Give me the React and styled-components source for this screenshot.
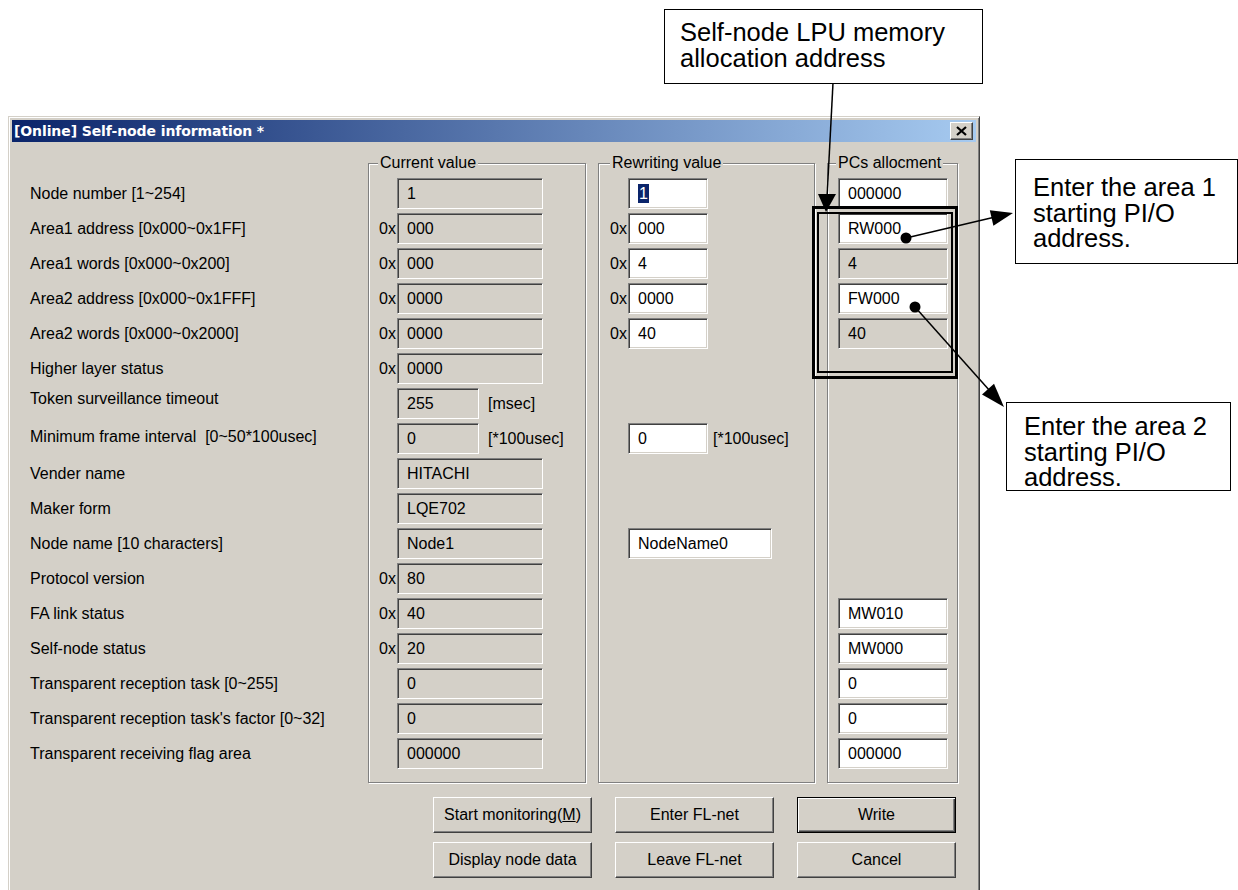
import React from 'react';
import styled, { createGlobalStyle, css } from 'styled-components';

const GlobalStyle = createGlobalStyle`
  html, body {
    margin: 0;
    padding: 0;
    background: #fff;
  }
  body {
    font-family: "Liberation Sans", Arial, sans-serif;
    color: #000;
  }
`;

const FACE = '#d4d0c8';

const Page = styled.div`
  position: relative;
  width: 1238px;
  height: 890px;
  overflow: hidden;
  box-sizing: border-box;
  padding: 116px 0 0 8px;
`;

const Dialog = styled.div`
  width: 972px;
  height: 800px;
  box-sizing: border-box;
  background: ${FACE};
  border: 1px solid;
  border-color: ${FACE} #404040 #404040 ${FACE};
  box-shadow: inset 1px 1px 0 #fff, inset -1px -1px 0 #808080;
  padding: 3px;
`;

const TitleBar = styled.div`
  height: 22px;
  display: flex;
  align-items: center;
  justify-content: space-between;
  padding: 0 3px 0 2px;
  background: linear-gradient(to right, #0a246a, #a6caf0);
`;

const Title = styled.span`
  font: bold 14px "DejaVu Sans", Verdana, sans-serif;
  letter-spacing: -0.1px;
  color: #fff;
  white-space: nowrap;
`;

const CloseButton = styled.div`
  width: 23px;
  height: 18px;
  box-sizing: border-box;
  display: flex;
  align-items: center;
  justify-content: center;
  background: ${FACE};
  border: 1px solid;
  border-color: #fff #404040 #404040 #fff;
  box-shadow: inset -1px -1px 0 #808080;
`;

const Body = styled.div`
  padding: 12px 0 0 18px;
`;

const Columns = styled.div`
  display: flex;
  align-items: flex-start;
`;

const LabelColumn = styled.div`
  width: 338px;
  padding-top: 24px;
  display: flex;
  flex-direction: column;
  gap: 4px;
`;

const Label = styled.div`
  height: 31px;
  box-sizing: border-box;
  display: flex;
  align-items: center;
  font-size: 16px;
  white-space: pre;
  padding-bottom: ${p => p.$lift || 0}px;
`;

const Group = styled.fieldset`
  width: ${p => p.$w}px;
  box-sizing: border-box;
  margin: 0 0 0 ${p => p.$gap}px;
  padding: 6px 0 13px 0;
  border: 1px solid #808080;
  box-shadow: inset 1px 1px 0 #fff, 1px 1px 0 #fff;
  display: flex;
  flex-direction: column;
  gap: 4px;
`;

const Legend = styled.legend`
  font-size: 16px;
  line-height: 18px;
  padding: 0 2px;
  margin-left: ${p => p.$offset}px;
  background: ${FACE};
  white-space: nowrap;
`;

const Row = styled.div`
  height: 31px;
  display: flex;
  align-items: center;
  padding-left: ${p => p.$indent}px;
`;

const Prefix = styled.span`
  width: 19px;
  box-sizing: border-box;
  padding-right: 1px;
  text-align: right;
  font-size: 16px;
`;

const Field = styled.div`
  width: ${p => p.$w}px;
  height: 31px;
  box-sizing: border-box;
  display: flex;
  align-items: center;
  padding-left: 9px;
  font-size: 16px;
  white-space: nowrap;
  background: ${p => (p.$white ? '#fff' : FACE)};
  border: 1px solid;
  border-color: #808080 #fff #fff #808080;
  box-shadow: inset 1px 1px 0 #404040, inset -1px -1px 0 ${FACE};
`;

const Selected = styled.span`
  background: #0a246a;
  color: #fff;
  padding: 0 1px;
  line-height: 19px;
`;

const Unit = styled.span`
  margin-left: ${p => p.$gap}px;
  font-size: 16px;
  white-space: nowrap;
`;

const ButtonGrid = styled.div`
  margin: 14px 0 0 403px;
  display: grid;
  grid-template-columns: repeat(3, 159px);
  grid-auto-rows: 36px;
  column-gap: 23px;
  row-gap: 9px;
`;

const Button = styled.button`
  margin: 0;
  padding: 0;
  font: 16px "Liberation Sans", Arial, sans-serif;
  color: #000;
  background: ${FACE};
  border: 1px solid;
  border-color: #fff #404040 #404040 #fff;
  box-shadow: inset -1px -1px 0 #808080, inset 1px 1px 0 ${FACE};
  ${p => p.$default && css`
    border-color: #000;
    box-shadow: inset 1px 1px 0 #fff, inset -1px -1px 0 #404040, inset -2px -2px 0 #808080;
  `}
`;

const Callout = styled.div`
  position: absolute;
  left: ${p => p.$x}px;
  top: ${p => p.$y}px;
  width: ${p => p.$w}px;
  height: ${p => p.$h}px;
  box-sizing: border-box;
  padding: ${p => p.$pt}px 0 0 ${p => p.$pl}px;
  background: #fff;
  border: 1.5px solid #000;
  font: 25.5px/25.5px "Liberation Sans", Arial, sans-serif;
  color: #000;
`;

const Overlay = styled.svg`
  position: absolute;
  left: 0;
  top: 0;
  pointer-events: none;
`;

// one entry per dialog row: label, current value, rewriting value, PCs allocation
const ROWS = [
  { label: 'Node number [1~254]', cur: { v: '1' }, rw: { v: '1', sel: true, w: 80 }, pcs: { v: '000000', white: true } },
  { label: 'Area1 address [0x000~0x1FF]', cur: { v: '000', hex: true }, rw: { v: '000', hex: true, w: 80 }, pcs: { v: 'RW000', white: true } },
  { label: 'Area1 words [0x000~0x200]', cur: { v: '000', hex: true }, rw: { v: '4', hex: true, w: 80 }, pcs: { v: '4' } },
  { label: 'Area2 address [0x000~0x1FFF]', cur: { v: '0000', hex: true }, rw: { v: '0000', hex: true, w: 80 }, pcs: { v: 'FW000', white: true } },
  { label: 'Area2 words [0x000~0x2000]', cur: { v: '0000', hex: true }, rw: { v: '40', hex: true, w: 80 }, pcs: { v: '40' } },
  { label: 'Higher layer status', cur: { v: '0000', hex: true } },
  { label: 'Token surveillance timeout', lift: 10, cur: { v: '255', w: 82, unit: '[msec]' } },
  { label: 'Minimum frame interval  [0~50*100usec]', lift: 4, cur: { v: '0', w: 82, unit: '[*100usec]' }, rw: { v: '0', w: 80, unit: '[*100usec]' } },
  { label: 'Vender name', cur: { v: 'HITACHI' } },
  { label: 'Maker form', cur: { v: 'LQE702' } },
  { label: 'Node name [10 characters]', cur: { v: 'Node1' }, rw: { v: 'NodeName0', w: 144 } },
  { label: 'Protocol version', cur: { v: '80', hex: true } },
  { label: 'FA link status', cur: { v: '40', hex: true }, pcs: { v: 'MW010', white: true } },
  { label: 'Self-node status', cur: { v: '20', hex: true }, pcs: { v: 'MW000', white: true } },
  { label: 'Transparent reception task [0~255]', cur: { v: '0' }, pcs: { v: '0', white: true } },
  { label: "Transparent reception task's factor [0~32]", cur: { v: '0' }, pcs: { v: '0', white: true } },
  { label: 'Transparent receiving flag area', cur: { v: '000000' }, pcs: { v: '000000', white: true } },
];

function Cell({ cell, prefixed, white, width, unitGap, indent }) {
  if (!cell) return <Row $indent={indent} />;
  return (
    <Row $indent={indent}>
      {prefixed && <Prefix>{cell.hex ? '0x' : ''}</Prefix>}
      <Field $w={cell.w || width} $white={white || cell.white}>
        {cell.sel ? <Selected>{cell.v}</Selected> : cell.v}
      </Field>
      {cell.unit && <Unit $gap={unitGap}>{cell.unit}</Unit>}
    </Row>
  );
}

function CloseIcon() {
  return (
    <svg width="11" height="10" viewBox="0 0 11 10">
      <path d="M1 1 L10 9 M10 1 L1 9" stroke="#000" strokeWidth="2.2" />
    </svg>
  );
}

function Annotations() {
  return (
    <Overlay width="1238" height="890" viewBox="0 0 1238 890">
      <g stroke="#000" fill="none">
        <line x1="833" y1="83" x2="827" y2="198" strokeWidth="1.5" />
        <rect x="813.5" y="207.5" width="143" height="170" strokeWidth="3" />
        <rect x="818" y="213" width="134" height="159" strokeWidth="2" />
        <line x1="906" y1="238" x2="993" y2="217.5" strokeWidth="1.5" />
        <line x1="915" y1="307" x2="990" y2="391" strokeWidth="1.5" />
      </g>
      <g fill="#000">
        <polygon points="826,212 818,194 836,194" />
        <circle cx="906" cy="238" r="5.5" />
        <polygon points="1013,213 993.4,225.8 989.8,210.2" />
        <circle cx="915" cy="307" r="5.5" />
        <polygon points="1004,407 982,394.4 994,383.8" />
      </g>
    </Overlay>
  );
}

export default function App() {
  return (
    <Page>
      <GlobalStyle />
      <Dialog>
        <TitleBar>
          <Title>[Online] Self-node information *</Title>
          <CloseButton><CloseIcon /></CloseButton>
        </TitleBar>
        <Body>
          <Columns>
            <LabelColumn>
              {ROWS.map(r => <Label key={r.label} $lift={r.lift}>{r.label}</Label>)}
            </LabelColumn>
            <Group $w={218} $gap={0}>
              <Legend $offset={9}>Current value</Legend>
              {ROWS.map(r => (
                <Cell key={r.label} cell={r.cur} prefixed width={146} unitGap={9} indent={9} />
              ))}
            </Group>
            <Group $w={217} $gap={12}>
              <Legend $offset={11}>Rewriting value</Legend>
              {ROWS.map(r => (
                <Cell key={r.label} cell={r.rw} prefixed white width={80} unitGap={5} indent={10} />
              ))}
            </Group>
            <Group $w={131} $gap={12}>
              <Legend $offset={8}>PCs allocment</Legend>
              {ROWS.map(r => (
                <Cell key={r.label} cell={r.pcs} width={110} indent={10} />
              ))}
            </Group>
          </Columns>
          <ButtonGrid>
            <Button>Start monitoring(<u>M</u>)</Button>
            <Button>Enter FL-net</Button>
            <Button $default>Write</Button>
            <Button>Display node data</Button>
            <Button>Leave FL-net</Button>
            <Button>Cancel</Button>
          </ButtonGrid>
        </Body>
      </Dialog>
      <Callout $x={664} $y={9} $w={319} $h={75} $pt={10} $pl={15}>
        Self-node LPU memory<br />allocation address
      </Callout>
      <Callout $x={1015} $y={159} $w={223} $h={105} $pt={15} $pl={17}>
        Enter the area 1<br />starting PI/O<br />address.
      </Callout>
      <Callout $x={1006} $y={402} $w={225} $h={89} $pt={11} $pl={17}>
        Enter the area 2<br />starting PI/O<br />address.
      </Callout>
      <Annotations />
    </Page>
  );
}
